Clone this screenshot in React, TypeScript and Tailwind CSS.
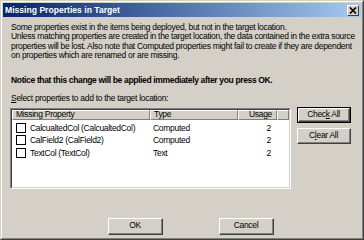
import React from "react";

const rows = [
  { name: "CalcualtedCol (CalcualtedCol)", type: "Computed", usage: 2 },
  { name: "CalField2 (CalField2)", type: "Computed", usage: 2 },
  { name: "TextCol (TextCol)", type: "Text", usage: 2 },
];

function Btn({ children, className = "", focused = false }: { children: React.ReactNode; className?: string; focused?: boolean }) {
  return (
    <div className={`${focused ? "border border-black" : ""} ${className}`}>
      <div className="h-full w-full border-t border-l border-t-white border-l-white border-b border-r border-b-[#404040] border-r-[#404040] bg-[#d4d0c8]">
        <div className="h-full w-full flex items-center justify-center border-b border-r border-b-[#808080] border-r-[#808080] text-black leading-none">
          {children}
        </div>
      </div>
    </div>
  );
}

function HeaderCell({ children, className = "" }: { children?: React.ReactNode; className?: string }) {
  return (
    <div className={`h-full border-t border-l border-t-white border-l-white border-b border-r border-b-[#808080] border-r-[#808080] flex items-center ${className}`}>
      {children}
    </div>
  );
}

export default function App() {
  return (
    <div className="w-[364px] h-[240px] overflow-hidden bg-[#d4d0c8] font-['Liberation_Sans',Arial,sans-serif] text-[8.5px] tracking-[-0.3px] whitespace-nowrap text-black border border-t-[#d4d0c8] border-l-[#d4d0c8] border-b-[#404040] border-r-[#404040]">
      <div className="h-full w-full border border-t-white border-l-white border-b-[#808080] border-r-[#808080] p-px flex flex-col">
        <div className="h-[14px] shrink-0 bg-gradient-to-r from-[#0a246a] to-[#a6caf0] flex items-center justify-between pl-[2px] pr-[2px]">
          <span className="text-white font-bold text-[8.6px] tracking-normal leading-none">Missing Properties in Target</span>
          <div className="w-[12px] h-[11px] border-t border-l border-t-white border-l-white border-b border-r border-b-[#404040] border-r-[#404040] bg-[#d4d0c8] flex items-center justify-center">
            <svg width="8" height="7" viewBox="0 0 8 7">
              <path d="M1 0.5 L7 6.5 M7 0.5 L1 6.5" stroke="black" strokeWidth="1.6" />
            </svg>
          </div>
        </div>

        <div className="px-[8px] flex flex-col">
          <p className="mt-[6px] leading-[9.33px]">
            Some properties exist in the items being deployed, but not in the target location.
            <br />
            Unless matching properties are created in the target location, the data contained in the extra source
            <br />
            properties will be lost. Also note that Computed properties might fail to create if they are dependent
            <br />
            on properties which are renamed or are missing.
          </p>
          <p className="mt-[15.6px] leading-[9.33px] font-bold text-[8.5px] tracking-[-0.35px]">
            Notice that this change will be applied immediately after you press OK.
          </p>
          <p className="mt-[9px] leading-[9.33px]">
            <span className="underline">S</span>elect properties to add to the target location:
          </p>

          <div className="mt-[4px] flex items-start -ml-[1px]">
            <div className="w-[281px] h-[81px] border border-t-[#808080] border-l-[#808080] border-b-white border-r-white">
              <div className="h-full w-full border border-t-[#404040] border-l-[#404040] border-b-[#d4d0c8] border-r-[#d4d0c8] bg-white flex flex-col">
                <div className="h-[10px] flex bg-[#d4d0c8] leading-none">
                  <HeaderCell className="w-[138px] pl-[3px]">Missing Property</HeaderCell>
                  <HeaderCell className="w-[88px] pl-[3px]">Type</HeaderCell>
                  <HeaderCell className="w-[39px] justify-end pr-[4px]">Usage</HeaderCell>
                  <HeaderCell className="flex-1" />
                </div>
                <div className="flex flex-col pt-[2px]">
                  {rows.map((r) => (
                    <div key={r.name} className="h-[12.5px] flex items-center leading-none">
                      <div className="w-[138px] flex items-center pl-[4px]">
                        <div className="w-[10px] h-[10px] border border-black bg-white shrink-0" />
                        <span className="ml-[4px]">{r.name}</span>
                      </div>
                      <div className="w-[88px] pl-[3px]">{r.type}</div>
                      <div className="w-[39px] text-right pr-[6px]">{r.usage}</div>
                    </div>
                  ))}
                </div>
              </div>
            </div>

            <div className="ml-[6px] -mt-[1px] flex flex-col gap-[5px]">
              <Btn focused className="w-[54px] h-[16px]">
                <span>
                  Chec<span className="underline">k</span> All
                </span>
              </Btn>
              <Btn className="w-[54px] h-[16px]">
                <span>
                  C<span className="underline">l</span>ear All
                </span>
              </Btn>
            </div>
          </div>

          <div className="mt-[29px] flex pl-[97px] gap-[56px]">
            <Btn className="w-[55px] h-[17px]">OK</Btn>
            <Btn className="w-[55px] h-[17px]">Cancel</Btn>
          </div>
        </div>
      </div>
    </div>
  );
}
